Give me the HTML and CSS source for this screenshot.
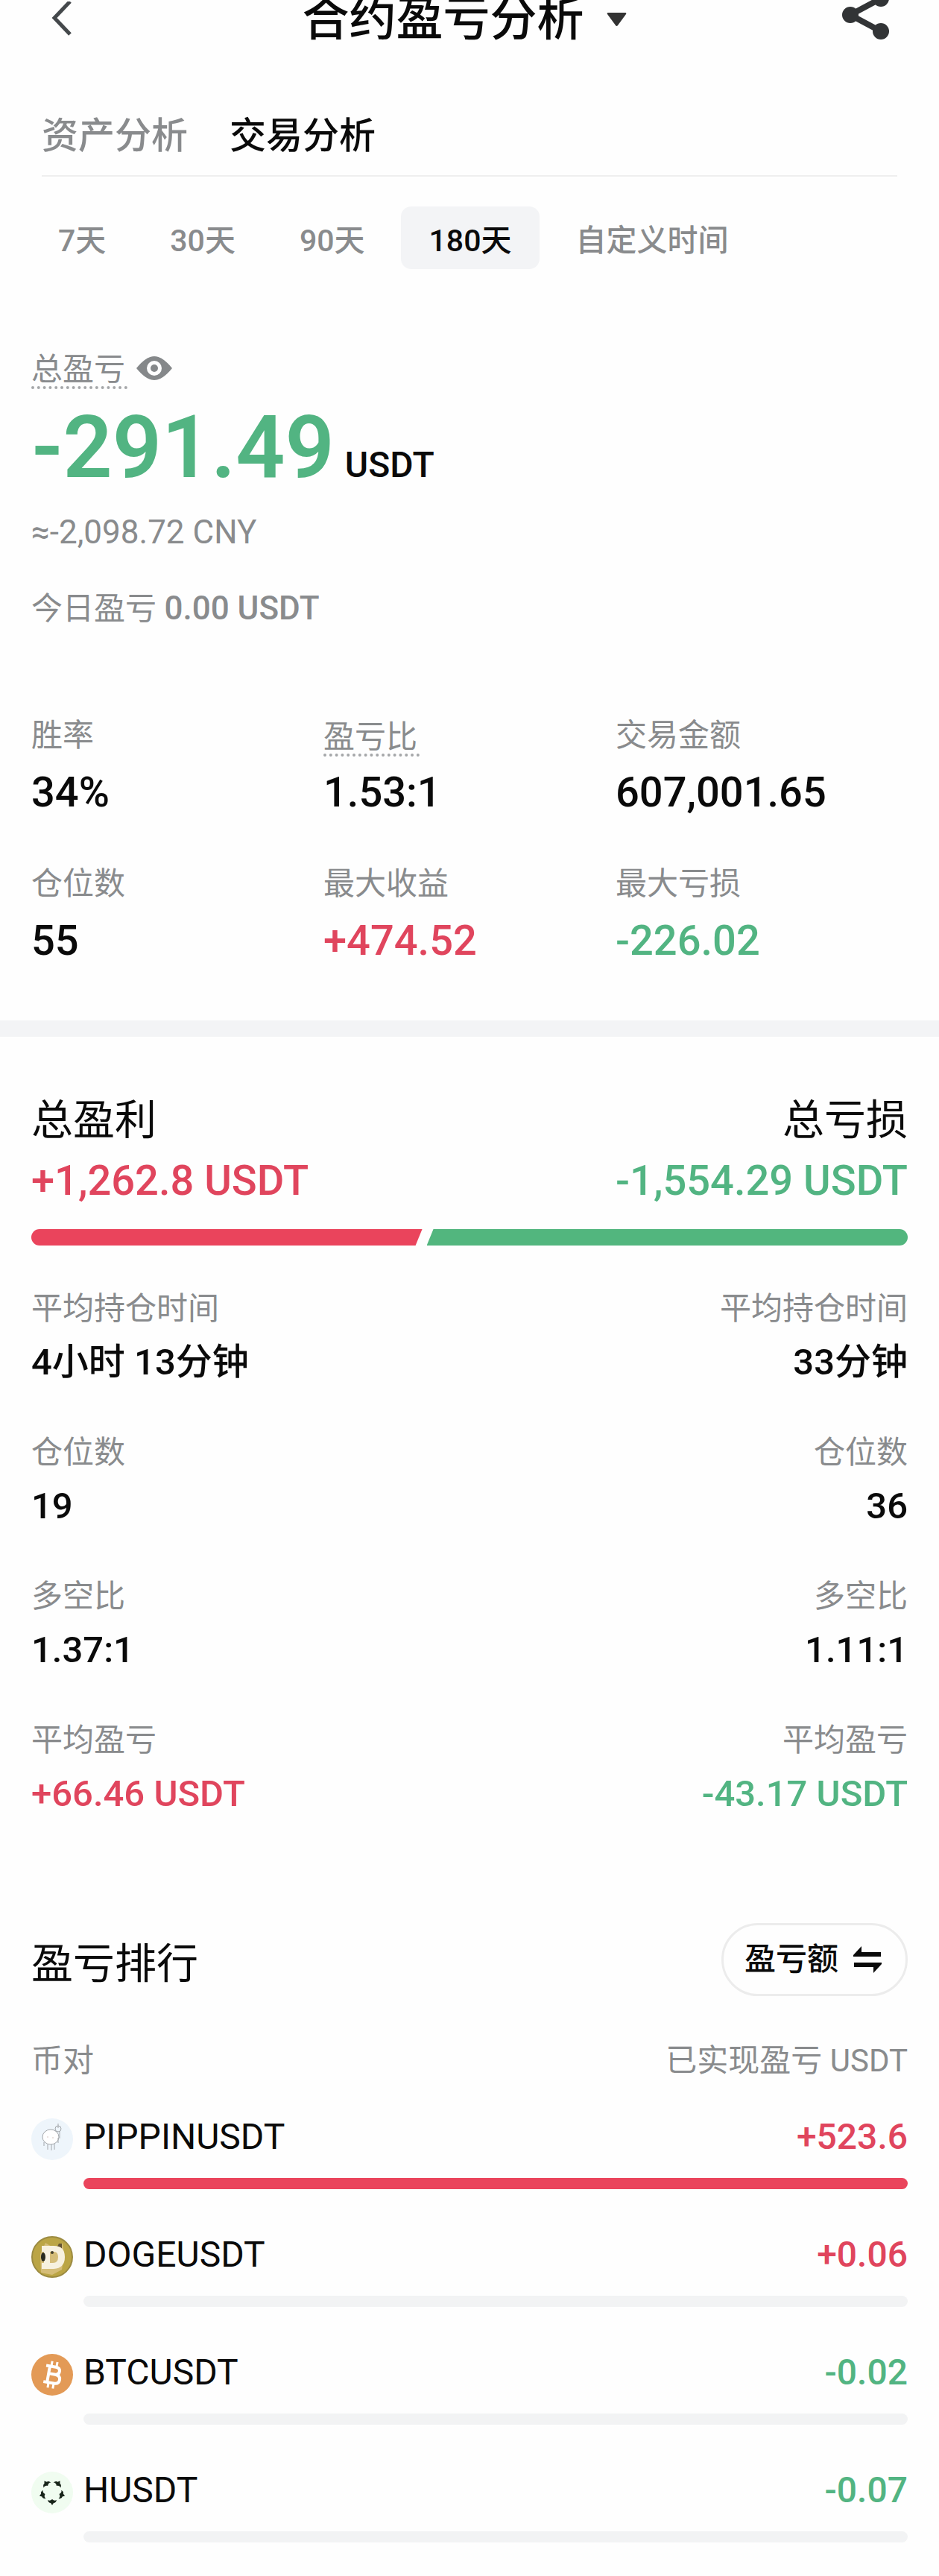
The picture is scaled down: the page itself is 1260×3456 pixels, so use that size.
FILE: index.html
```html
<!DOCTYPE html>
<html lang="zh-CN">
<head>
    <meta charset="UTF-8">
    <meta name="viewport" content="width=device-width, initial-scale=1.0">
    <title>合约盈亏分析</title>
    <link rel="stylesheet" href="styles.css">
</head>
<body>
    <header class="header">
        <button type="button" class="icon-btn" aria-label="返回">
            <svg width="28" height="48" viewBox="0 0 28 48" fill="none" stroke="#44484b" stroke-width="5">
                <path d="M25 0L4 22l21 22"/>
            </svg>
        </button>
        <h1>
            <button type="button" class="title-btn">
                合约盈亏分析
                <svg width="27" height="18" viewBox="0 0 27 18" fill="#333"><path d="M2 0h23q2 0 1 2L15 17q-1.500 2-3 0L1 2Q0 0 2 0z"/></svg>
            </button>
        </h1>
        <button type="button" class="icon-btn" aria-label="分享">
            <svg width="66" height="66" viewBox="0 0 66 66" fill="#323436">
                <path d="M53 5L12 27l41 22" fill="none" stroke="#323436" stroke-width="8"/>
                <circle cx="12" cy="27" r="11"/>
                <circle cx="53" cy="5" r="11"/>
                <circle cx="53" cy="49" r="11"/>
            </svg>
        </button>
    </header>

    <nav class="tabs">
        <a href="#assets">资产分析</a>
        <a href="#trades" class="active">交易分析</a>
    </nav>

    <div class="filters">
        <button type="button">7天</button>
        <button type="button">30天</button>
        <button type="button">90天</button>
        <button type="button" class="active">180天</button>
        <button type="button">自定义时间</button>
    </div>

    <main>
        <section class="summary">
            <div class="summary-label">
                <span class="hint">总盈亏</span>
                <button type="button" class="eye-btn" aria-label="隐藏金额">
                    <svg width="48" height="32" viewBox="0 0 48 32">
                        <path d="M0 16Q13 0 24 0t24 16Q35 32 24 32T0 16z" fill="#85888a"/>
                        <circle cx="24" cy="16" r="10" fill="#fefefe"/>
                        <circle cx="24" cy="16" r="5" fill="#85888a"/>
                    </svg>
                </button>
            </div>
            <p class="total"><span class="amount down">-291.49</span> <span class="unit">USDT</span></p>
            <p class="approx">≈-2,098.72 CNY</p>
            <p class="today">今日盈亏 <b>0.00 USDT</b></p>

            <dl class="stats">
                <div>
                    <dt>胜率</dt>
                    <dd>34%</dd>
                </div>
                <div>
                    <dt><span class="hint">盈亏比</span></dt>
                    <dd>1.53:1</dd>
                </div>
                <div>
                    <dt>交易金额</dt>
                    <dd>607,001.65</dd>
                </div>
                <div>
                    <dt>仓位数</dt>
                    <dd>55</dd>
                </div>
                <div>
                    <dt>最大收益</dt>
                    <dd class="up">+474.52</dd>
                </div>
                <div>
                    <dt>最大亏损</dt>
                    <dd class="down">-226.02</dd>
                </div>
            </dl>
        </section>

        <section class="compare">
            <div class="compare-head">
                <div>
                    <h2>总盈利</h2>
                    <p class="up">+1,262.8 USDT</p>
                </div>
                <div>
                    <h2>总亏损</h2>
                    <p class="down">-1,554.29 USDT</p>
                </div>
            </div>

            <div class="ratio">
                <div class="ratio-up"></div>
                <div class="ratio-down"></div>
            </div>

            <div class="details">
                <dl>
                    <div><dt>平均持仓时间</dt><dd>4小时 13分钟</dd></div>
                    <div><dt>仓位数</dt><dd>19</dd></div>
                    <div><dt>多空比</dt><dd>1.37:1</dd></div>
                    <div><dt>平均盈亏</dt><dd class="up">+66.46 USDT</dd></div>
                </dl>
                <dl>
                    <div><dt>平均持仓时间</dt><dd>33分钟</dd></div>
                    <div><dt>仓位数</dt><dd>36</dd></div>
                    <div><dt>多空比</dt><dd>1.11:1</dd></div>
                    <div><dt>平均盈亏</dt><dd class="down">-43.17 USDT</dd></div>
                </dl>
            </div>
        </section>

        <section class="ranking">
            <div class="ranking-head">
                <h2>盈亏排行</h2>
                <button type="button" class="sort-btn">
                    盈亏额
                    <svg width="38" height="36" viewBox="0 0 38 36" fill="#0a0a0a">
                        <path d="M11 0v8h26v6H0v-2z"/>
                        <path d="M27 36v-8H1v-6h37v2z"/>
                    </svg>
                </button>
            </div>

            <table>
                <thead>
                    <tr>
                        <th>币对</th>
                        <th>已实现盈亏 USDT</th>
                    </tr>
                </thead>
                <tbody>
                    <tr>
                        <td class="pair">
                            <svg width="56" height="56" viewBox="0 0 56 56">
                                <circle cx="28" cy="28" r="28" fill="#eef5fb"/>
                                <g fill="none" stroke="#a3a7ab" stroke-width="1">
                                    <ellipse cx="26" cy="25" rx="11" ry="10" fill="#fff"/>
                                    <circle cx="36" cy="14" r="4"/>
                                    <path d="M36 13V7M38 18v9M17 32v5M22 35v7M27 35v8M31 34v8M36 26v7"/>
                                </g>
                                <path d="M21 25h2M28 26h2" stroke="#d8c6c2" stroke-width="1"/>
                            </svg>
                            PIPPINUSDT
                        </td>
                        <td class="profit up">+523.6</td>
                        <td class="bar"><div><i class="fill" style="width: 100%"></i></div></td>
                    </tr>
                    <tr>
                        <td class="pair">
                            <svg width="56" height="56" viewBox="0 0 56 56">
                                <circle cx="28" cy="28" r="27" fill="#bba545" stroke="#9c8b42" stroke-width="2"/>
                                <path d="M12 24l7-15 8 5 11 2 4-7 2 17-3 19-13 7-15-3z" fill="#d5bd78"/>
                                <path d="M37 10l4 0v7l-6-3z" fill="#665533"/>
                                <path d="M14 13h16q15 0 15 15T30 44H14v-8h3V21h-3zM25 21v15h4q7 0 7-8t-7-7z" fill="#f7f1df" fill-rule="evenodd"/>
                                <ellipse cx="16" cy="28" rx="3" ry="6" fill="#292b20"/>
                                <circle cx="28" cy="22" r="2" fill="#45402b"/>
                            </svg>
                            DOGEUSDT
                        </td>
                        <td class="profit up">+0.06</td>
                        <td class="bar"><div></div></td>
                    </tr>
                    <tr>
                        <td class="pair">
                            <svg width="56" height="56" viewBox="0 0 56 56">
                                <circle cx="28" cy="28" r="28" fill="#e39a56"/>
                                <g transform="rotate(10 28 28)" fill="none" stroke="#fff" stroke-width="4">
                                    <path d="M18 17h13q6 0 6 5t-6 5H23h9q7 0 7 6t-7 6H18M23 17v22"/>
                                    <path d="M25 10v8M32 10v8M25 38v8M32 38v8" stroke-width="3"/>
                                </g>
                            </svg>
                            BTCUSDT
                        </td>
                        <td class="profit down">-0.02</td>
                        <td class="bar"><div></div></td>
                    </tr>
                    <tr>
                        <td class="pair">
                            <svg width="56" height="56" viewBox="0 0 56 56">
                                <circle cx="28" cy="28" r="28" fill="#f0fcf0"/>
                                <g fill="#172419">
                                    <path id="petal" d="M22 38q3 2 6-1 3 3 6 1-1 4-4 4l-2 3-2-3q-3 0-4-4z"/>
                                    <use href="#petal" transform="rotate(72 28 27)"/>
                                    <use href="#petal" transform="rotate(144 28 27)"/>
                                    <use href="#petal" transform="rotate(216 28 27)"/>
                                    <use href="#petal" transform="rotate(288 28 27)"/>
                                </g>
                            </svg>
                            HUSDT
                        </td>
                        <td class="profit down">-0.07</td>
                        <td class="bar"><div></div></td>
                    </tr>
                </tbody>
            </table>
        </section>
    </main>
</body>
</html>
```

FILE: styles.css
```css
:root {
    --up: #e0455d;
    --down: #52b482;
    --up-bar: #ea445c;
    --down-bar: #52b67e;
    --text: #0a0a0a;
    --muted: #898b8d;
    --fill: #f3f4f6;
    --page-bg: #fefefe;
}

* {
    margin: 0;
    padding: 0;
    box-sizing: border-box;
}

body {
    background-color: var(--page-bg);
    color: var(--text);
    font-family: Roboto, 'Noto Sans CJK SC', sans-serif;
    font-size: 42px;
    line-height: 48px;
}

button {
    border: none;
    background: none;
    color: inherit;
    font: inherit;
    cursor: pointer;
}

svg {
    display: block;
    flex-shrink: 0;
}

.up {
    color: var(--up);
}

.down {
    color: var(--down);
}

/* header */
.header {
    display: flex;
    align-items: center;
    justify-content: space-between;
    height: 52px;
    padding: 0 65px 0 69px;
}

.icon-btn {
    min-width: 48px;
}

.title-btn {
    display: flex;
    align-items: center;
    gap: 30px;
    font-size: 63px;
    font-weight: 500;
    line-height: 52px;
}

/* tabs */
.tabs {
    display: flex;
    gap: 56px;
    margin: 0 56px;
    padding: 101px 0 22px;
    border-bottom: 2px solid #efefef;
    font-size: 49px;
    font-weight: 500;
    line-height: 60px;
}

.tabs a {
    color: var(--muted);
    text-decoration: none;
}

.tabs .active {
    color: var(--text);
}

/* time range */
.filters {
    display: flex;
    gap: 10px;
    padding: 40px 40px 0;
}

.filters button {
    height: 84px;
    padding: 8px 38px 0;
    border-radius: 14px;
    color: var(--muted);
    font-size: 41px;
    font-weight: 500;
}

.filters .active {
    background-color: var(--fill);
    color: var(--text);
}

/* summary */
.summary {
    padding: 109px 42px 77px;
    border-bottom: 22px solid var(--fill);
}

.summary-label {
    display: flex;
    gap: 12px;
    color: var(--muted);
}

.hint {
    display: inline-block;
    padding: 4px 3px 0 0;
    border-bottom: 4px dotted #a5a7a9;
    line-height: 44px;
}

.eye-btn {
    height: 48px;
}

.total {
    display: flex;
    align-items: baseline;
    gap: 14px;
    margin-top: 20px;
}

.amount {
    font-size: 116px;
    font-weight: 600;
    line-height: 116px;
}

.unit {
    font-size: 48px;
    font-weight: 500;
}

.approx {
    margin-top: 32px;
    color: var(--muted);
    font-size: 44px;
}

.today {
    margin-top: 54px;
    color: var(--muted);
}

.today b {
    font-size: 44px;
    font-weight: 500;
}

.stats {
    display: grid;
    grid-template-columns: repeat(3, 1fr);
    row-gap: 69px;
    margin-top: 122px;
}

.stats dt {
    height: 52px;
    margin-bottom: 18px;
    color: var(--muted);
}

.stats dd {
    font-size: 56px;
    font-weight: 500;
    line-height: 60px;
}

/* profit and loss */
.compare {
    padding: 82px 42px 0;
}

.compare-head,
.details {
    display: flex;
    justify-content: space-between;
}

.compare-head > :last-child,
.details > :last-child {
    text-align: right;
}

h2 {
    font-size: 56px;
    font-weight: 400;
    line-height: 60px;
}

.compare-head p {
    margin-top: 21px;
    font-size: 56px;
    font-weight: 500;
    line-height: 60px;
}

.ratio {
    display: flex;
    gap: 6px;
    height: 22px;
    margin-top: 35px;
    border-radius: 11px;
    overflow: hidden;
}

.ratio-up {
    flex: 1263;
    background-color: var(--up-bar);
    clip-path: polygon(0 0, 100% 0, calc(100% - 9px) 100%, 0 100%);
}

.ratio-down {
    flex: 1554;
    background-color: var(--down-bar);
    clip-path: polygon(9px 0, 100% 0, 100% 100%, 0 100%);
}

.details {
    margin-top: 61px;
}

.details dl {
    display: grid;
    gap: 69px;
}

.details dt {
    margin-bottom: 20px;
    color: var(--muted);
}

.details dd {
    font-size: 49px;
    font-weight: 500;
    line-height: 56px;
}

/* ranking */
.ranking {
    padding: 145px 42px 0;
}

.ranking-head {
    display: flex;
    align-items: flex-end;
    justify-content: space-between;
}

.ranking-head h2 {
    line-height: 86px;
}

.sort-btn {
    display: flex;
    align-items: center;
    gap: 20px;
    height: 98px;
    padding: 0 32px 0 28px;
    border: 3px solid #ececec;
    border-radius: 49px;
    font-weight: 500;
}

table,
thead,
tbody {
    display: block;
}

table {
    margin-top: 63px;
}

tr {
    display: grid;
    grid-template-columns: 1fr auto;
}

thead tr {
    margin-bottom: 53px;
}

th {
    color: var(--muted);
    font-weight: 400;
    text-align: left;
}

tbody tr {
    padding-bottom: 63px;
    font-size: 48px;
    line-height: 50px;
}

tbody tr:last-child {
    padding-bottom: 40px;
}

.pair {
    display: flex;
    gap: 14px;
    height: 56px;
}

.profit {
    font-weight: 500;
}

.bar {
    grid-column: 1 / -1;
    margin-top: 24px;
    padding-left: 70px;
}

.bar div {
    height: 15px;
    border-radius: 8px;
    background-color: #f2f3f4;
    overflow: hidden;
}

.fill {
    display: block;
    height: 100%;
    background-color: var(--up-bar);
}
```
